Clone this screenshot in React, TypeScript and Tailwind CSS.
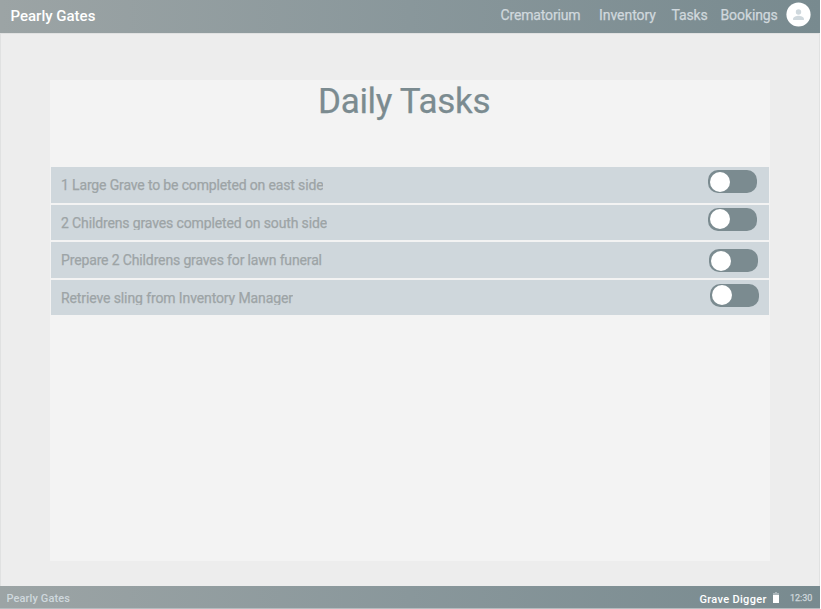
type Task = { label: string; toggle: string; clip: string; spacing: string };

const tasks: Task[] = [
  { label: "1 Large Grave to be completed on east side", toggle: "mt-[3px] mr-[12px]", clip: "mt-[8px] h-[18px]", spacing: "tracking-[-0.15px]" },
  { label: "2 Childrens graves completed on south side", toggle: "mt-[3px] mr-[12px]", clip: "mt-[8px] h-[17px]", spacing: "tracking-[-0.13px]" },
  { label: "Prepare 2 Childrens graves for lawn funeral", toggle: "mt-[7px] mr-[11px]", clip: "mt-[8px] h-[18px]", spacing: "tracking-[-0.14px]" },
  { label: "Retrieve sling from Inventory Manager", toggle: "mt-[4px] mr-[10px]", clip: "mt-[8px] h-[17px]", spacing: "tracking-[-0.11px]" },
];

const links = [
  { label: "Crematorium", box: "w-[98.5px] tracking-[-0.15px]" },
  { label: "Inventory", box: "w-[72.5px] tracking-[-0.05px]" },
  { label: "Tasks", box: "w-[49px] tracking-[-0.15px]" },
  { label: "Bookings", box: "w-[65.5px] tracking-[-0.1px]" },
];

function Toggle({ place }: { place: string }) {
  return (
    <button
      type="button"
      role="switch"
      aria-checked="false"
      className={`flex h-[23px] w-[49px] shrink-0 items-center rounded-[10px] bg-[#7b8b90] pl-[1.5px] ${place}`}
    >
      <span className="h-[20px] w-[20px] rounded-full bg-white" />
    </button>
  );
}

function Header() {
  return (
    <header className="flex h-[33px] shrink-0 items-start bg-linear-to-r from-[#9ca4a5] via-[#89979b] to-[#788a8f]">
      <span className="mt-[6px] ml-[10.5px] text-[15px] leading-[20px] font-medium whitespace-nowrap text-white">
        Pearly Gates
      </span>
      <nav className="mt-[5px] ml-auto flex text-[14px] leading-[20px] text-[#d0d8dd] [-webkit-text-stroke:0.25px_#d0d8dd]">
        {links.map((link) => (
          <a key={link.label} className={`whitespace-nowrap ${link.box}`}>
            {link.label}
          </a>
        ))}
      </nav>
      <svg viewBox="0 0 24 24" className="mt-[2px] mr-[9px] h-[25px] w-[25px] shrink-0">
        <circle cx="12" cy="12" r="11.6" fill="#fff" />
        <circle cx="12" cy="9.6" r="2.6" fill="#cfd8dd" />
        <path d="M6.8 17.2V16c0-1.7 3.4-2.7 5.2-2.7s5.2 1 5.2 2.7v1.2z" fill="#cfd8dd" />
      </svg>
    </header>
  );
}

function Footer() {
  return (
    <footer className="flex h-[23px] shrink-0 items-start border-b border-[#b5bdc0] bg-linear-to-r from-[#9ca4a5] via-[#89979b] to-[#788a8f]">
      <span className="mt-[5px] ml-[6.5px] h-[13px] overflow-hidden text-[11px] leading-[16px] font-medium tracking-[0.1px] whitespace-nowrap text-[#cfd8dd]">
        Pearly Gates
      </span>
      <span className="mt-[6px] ml-auto w-[73.5px] text-[11px] leading-[16px] font-medium tracking-[0.32px] whitespace-nowrap text-white">
        Grave Digger
      </span>
      <svg viewBox="0 0 6 11" className="mt-[6px] h-[11px] w-[6px]">
        <path d="M2 0h2v1h2v2H0V1h2z" fill="#a9b5b9" />
        <path d="M0 3h6v8H0z" fill="#fff" />
      </svg>
      <span className="mt-[4px] mr-[7px] ml-[11px] w-[23px] text-[9px] leading-[16px] whitespace-nowrap text-[#d0d8dd] [-webkit-text-stroke:0.25px_#d0d8dd]">
        12:30
      </span>
    </footer>
  );
}

export default function App() {
  return (
    <div className="h-[609px] w-[821px] overflow-hidden bg-white font-['Roboto',sans-serif]">
      <div className="flex h-[609px] w-[820px] flex-col">
        <Header />
        <main className="flex-1 border-x border-t border-[#e0e1e1] bg-[#ededed] px-[49px] pt-[46px]">
          <section className="h-[481px] w-[720px] bg-[#f3f3f3] px-px">
            <h1 className="h-[87px] pt-px pl-[267px] text-[35px] leading-[42px] tracking-[-0.3px] whitespace-nowrap text-[#7b8b90] [-webkit-text-stroke:0.25px_#7b8b90]">
              Daily Tasks
            </h1>
            <ul className="flex flex-col gap-[2px]">
              {tasks.map((task) => (
                <li key={task.label} className="flex h-[35.5px] items-start justify-between bg-[#cfd7dc] pl-[10px]">
                  <span
                    className={`overflow-hidden text-[14px] leading-[20px] whitespace-nowrap text-[#9da4a6] [-webkit-text-stroke:0.25px_#9da4a6] ${task.clip} ${task.spacing}`}
                  >
                    {task.label}
                  </span>
                  <Toggle place={task.toggle} />
                </li>
              ))}
            </ul>
          </section>
        </main>
        <Footer />
      </div>
    </div>
  );
}
